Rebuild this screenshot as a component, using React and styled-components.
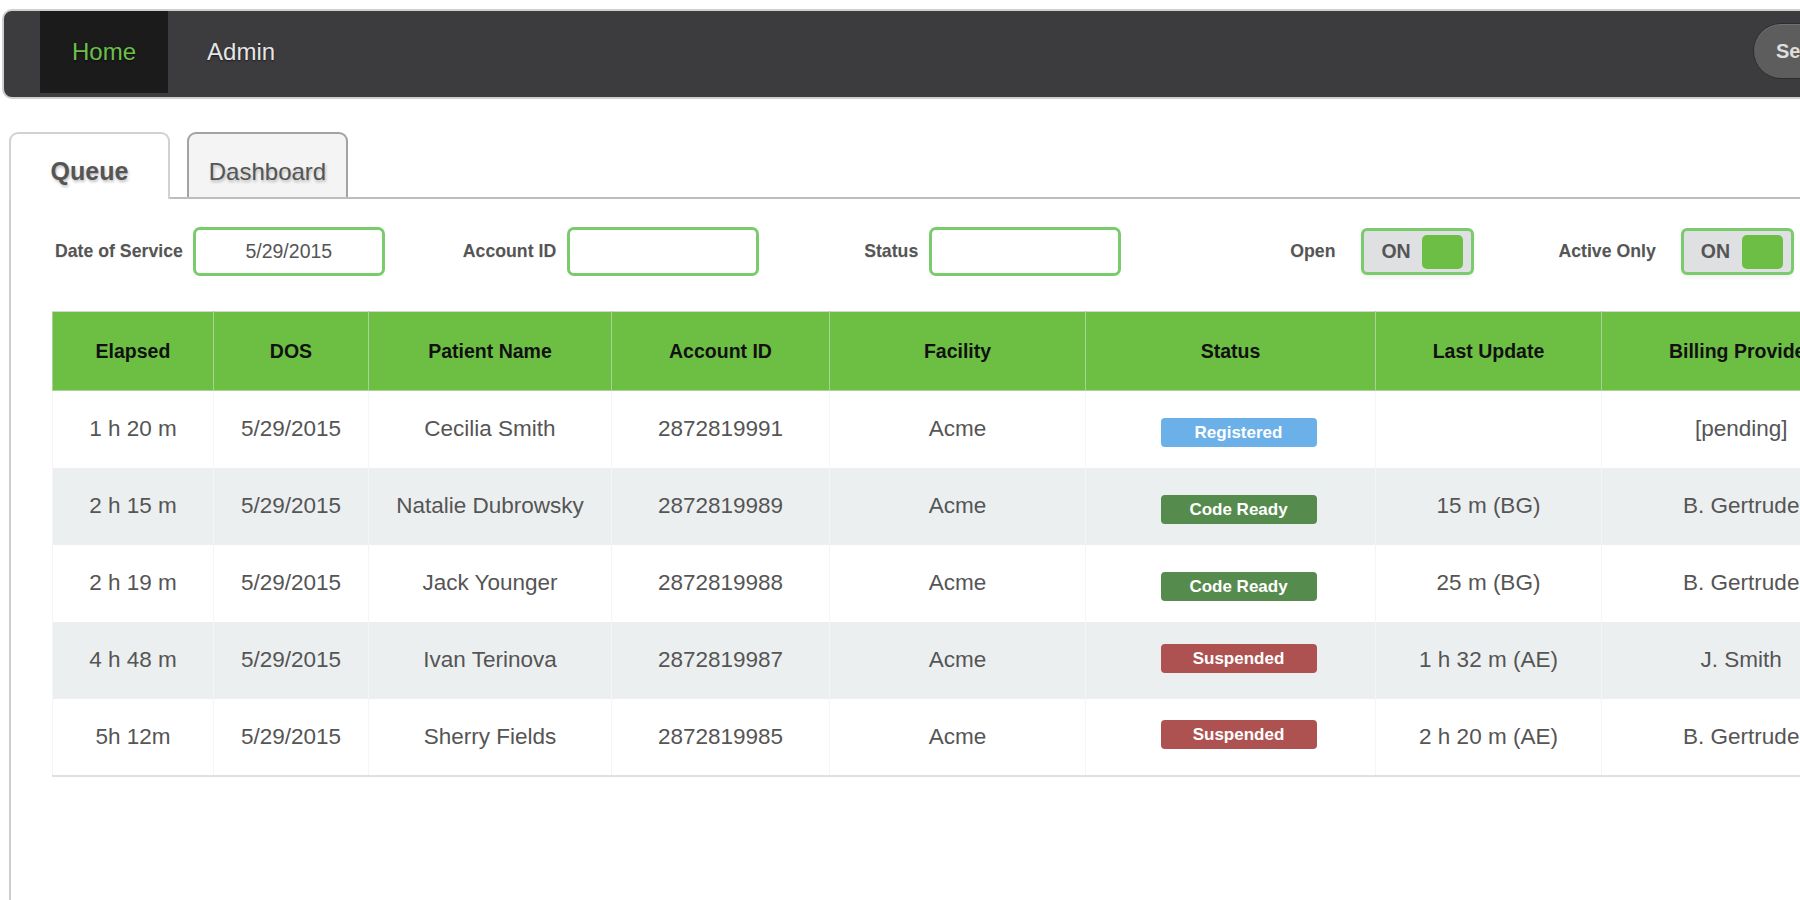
import React from 'react';
import styled, { createGlobalStyle } from 'styled-components';

const GlobalStyle = createGlobalStyle`
  html, body {
    margin: 0;
    padding: 0;
    background: #ffffff;
    overflow: hidden;
  }

  body {
    font-family: "Liberation Sans", Arial, sans-serif;
    color: #555;
  }
`;

const Page = styled.div`
  width: 1900px;
  padding: 9px 0 0 2px;
  box-sizing: border-box;
  min-height: 900px;
  display: flex;
  flex-direction: column;
`;

const NavBar = styled.nav`
  height: 90px;
  box-sizing: border-box;
  display: flex;
  align-items: stretch;
  gap: 7px;
  padding: 0 0 4px 36px;
  background: #3c3c3e;
  border: 2px solid #cfcfcf;
  border-radius: 10px;
`;

const NavItem = styled.a`
  display: flex;
  align-items: center;
  padding: 0 32px;
  font-size: 24px;
  color: ${p => (p.$active ? '#6cc04a' : '#e6e6e6')};
  background: ${p => (p.$active ? '#1b1b1b' : 'transparent')};
  text-shadow: 0 1px 2px rgba(0, 0, 0, 0.6);
  text-decoration: none;
  cursor: pointer;
`;

const NavButton = styled.button`
  margin: 12px 15px 0 auto;
  align-self: flex-start;
  width: 130px;
  height: 56px;
  padding: 0 0 0 22px;
  text-align: left;
  border-radius: 28px;
  border: 1px solid #2c2c2c;
  background: #5d5d5d;
  color: #dedede;
  font-family: "Liberation Sans", Arial, sans-serif;
  font-size: 20px;
  font-weight: bold;
  box-shadow: inset 0 1px 0 rgba(255, 255, 255, 0.12);
`;

const Section = styled.section`
  margin: 33px 0 0 7px;
  flex: 1;
  display: flex;
  flex-direction: column;
`;

const TabBar = styled.div`
  display: flex;
  align-items: flex-end;
  gap: 17px;
`;

const Tab = styled.div`
  position: relative;
  z-index: 1;
  width: 161px;
  height: ${p => (p.$active ? '67px' : '65px')};
  margin-bottom: ${p => (p.$active ? '-2px' : '0')};
  box-sizing: border-box;
  display: flex;
  align-items: flex-end;
  justify-content: center;
  padding-bottom: ${p => (p.$active ? '13px' : '11px')};
  border: 2px solid ${p => (p.$active ? '#d2d2d2' : '#a3a3a3')};
  border-bottom: none;
  border-radius: 9px 9px 0 0;
  background: ${p => (p.$active ? '#ffffff' : '#f4f4f4')};
  font-size: ${p => (p.$active ? '25px' : '24px')};
  font-weight: ${p => (p.$active ? 'bold' : 'normal')};
  color: #555;
  text-shadow: 1px 2px 3px rgba(0, 0, 0, 0.25);
  cursor: pointer;
`;

const Panel = styled.div`
  flex: 1;
  border-top: 2px solid #bdbdbd;
  border-left: 2px solid #cdcdcd;
  padding: 28px 0 0 0;
`;

const FilterRow = styled.div`
  display: flex;
  align-items: center;
  padding-left: 44px;
`;

const FilterGroup = styled.div`
  display: flex;
  align-items: center;
  gap: ${p => p.$gap}px;
  margin-left: ${p => p.$offset}px;
`;

const Label = styled.label`
  font-size: 17.7px;
  font-weight: bold;
  color: #555;
  text-shadow: 0 1px 1px rgba(0, 0, 0, 0.08);
`;

const Input = styled.input`
  width: 192px;
  height: 49px;
  box-sizing: border-box;
  border: 3px solid #7acb6b;
  border-radius: 7px;
  background: #fff;
  text-align: center;
  font-family: "Liberation Sans", Arial, sans-serif;
  font-size: 19.5px;
  color: #555;
  outline: none;
`;

const Toggle = styled.div`
  width: 113px;
  height: 47px;
  box-sizing: border-box;
  display: flex;
  align-items: center;
  justify-content: space-between;
  padding: 0 8px 0 17px;
  border: 3px solid #7acb6b;
  border-radius: 6px;
  background: #dfe0e1;
  box-shadow: 0 3px 4px rgba(0, 0, 0, 0.05);
  font-size: 19.5px;
  font-weight: bold;
  color: #555;
`;

const Knob = styled.span`
  width: 41px;
  height: 34px;
  border-radius: 5px;
  background: #6cbf44;
`;

const Table = styled.table`
  margin: 35px 0 0 41px;
  border-collapse: collapse;
  table-layout: fixed;
  width: 1820px;
  border-left: 1px solid #dcdcdc;
  border-bottom: 2px solid #e0e0e0;
`;

const Th = styled.th`
  width: ${p => p.$w}px;
  height: 78px;
  padding: 0;
  background: #6dbf43;
  border: 1px solid #a9d296;
  border-top-color: #cfd8cb;
  font-size: 19.5px;
  font-weight: bold;
  color: #111;
  text-align: center;
  white-space: nowrap;
  overflow: hidden;
`;

const Row = styled.tr`
  height: 77px;
  background: ${p => (p.$striped ? '#eceff0' : '#ffffff')};
`;

const Td = styled.td`
  padding: 0;
  border-left: 1px solid #f3f5f6;
  text-align: center;
  font-size: 22.5px;
  color: #555;
  white-space: nowrap;
`;

const badgeStyles = {
  Registered: { bg: '#6bb0e9', top: 6, bottom: 0 },
  'Code Ready': { bg: '#558b4c', top: 6, bottom: 0 },
  Suspended: { bg: '#ae5151', top: 0, bottom: 4 },
};

const Badge = styled.span`
  display: inline-block;
  width: 156px;
  height: 29px;
  line-height: 29px;
  margin: ${p => badgeStyles[p.$status].top}px 0 ${p => badgeStyles[p.$status].bottom}px 16px;
  border-radius: 4px;
  background: ${p => badgeStyles[p.$status].bg};
  color: #fff;
  font-size: 17px;
  font-weight: bold;
  vertical-align: middle;
`;

const columns = [
  { title: 'Elapsed', w: 160 },
  { title: 'DOS', w: 154 },
  { title: 'Patient Name', w: 242 },
  { title: 'Account ID', w: 217 },
  { title: 'Facility', w: 255 },
  { title: 'Status', w: 289 },
  { title: 'Last Update', w: 225 },
  { title: 'Billing Provider', w: 278 },
];

const rows = [
  { elapsed: '1 h 20 m', dos: '5/29/2015', name: 'Cecilia Smith', account: '2872819991', facility: 'Acme', status: 'Registered', update: '', provider: '[pending]' },
  { elapsed: '2 h 15 m', dos: '5/29/2015', name: 'Natalie Dubrowsky', account: '2872819989', facility: 'Acme', status: 'Code Ready', update: '15 m (BG)', provider: 'B. Gertrude' },
  { elapsed: '2 h 19 m', dos: '5/29/2015', name: 'Jack Younger', account: '2872819988', facility: 'Acme', status: 'Code Ready', update: '25 m (BG)', provider: 'B. Gertrude' },
  { elapsed: '4 h 48 m', dos: '5/29/2015', name: 'Ivan Terinova', account: '2872819987', facility: 'Acme', status: 'Suspended', update: '1 h 32 m (AE)', provider: 'J. Smith' },
  { elapsed: '5h 12m', dos: '5/29/2015', name: 'Sherry Fields', account: '2872819985', facility: 'Acme', status: 'Suspended', update: '2 h 20 m (AE)', provider: 'B. Gertrude' },
];

function App() {
  return (
    <Page>
      <GlobalStyle />
      <NavBar>
        <NavItem $active>Home</NavItem>
        <NavItem>Admin</NavItem>
        <NavButton>Search</NavButton>
      </NavBar>

      <Section>
        <TabBar>
          <Tab $active>Queue</Tab>
          <Tab>Dashboard</Tab>
        </TabBar>

        <Panel>
          <FilterRow>
            <FilterGroup $gap={10} $offset={0}>
              <Label>Date of Service</Label>
              <Input defaultValue="5/29/2015" />
            </FilterGroup>
            <FilterGroup $gap={11} $offset={78}>
              <Label>Account ID</Label>
              <Input />
            </FilterGroup>
            <FilterGroup $gap={11} $offset={105}>
              <Label>Status</Label>
              <Input />
            </FilterGroup>
            <FilterGroup $gap={26} $offset={169}>
              <Label>Open</Label>
              <Toggle>ON<Knob /></Toggle>
            </FilterGroup>
            <FilterGroup $gap={25} $offset={84}>
              <Label>Active Only</Label>
              <Toggle>ON<Knob /></Toggle>
            </FilterGroup>
          </FilterRow>

          <Table>
            <thead>
              <tr>
                {columns.map(col => (
                  <Th key={col.title} $w={col.w}>{col.title}</Th>
                ))}
              </tr>
            </thead>
            <tbody>
              {rows.map((row, i) => (
                <Row key={row.account} $striped={i % 2 === 1}>
                  <Td>{row.elapsed}</Td>
                  <Td>{row.dos}</Td>
                  <Td>{row.name}</Td>
                  <Td>{row.account}</Td>
                  <Td>{row.facility}</Td>
                  <Td><Badge $status={row.status}>{row.status}</Badge></Td>
                  <Td>{row.update}</Td>
                  <Td>{row.provider}</Td>
                </Row>
              ))}
            </tbody>
          </Table>
        </Panel>
      </Section>
    </Page>
  );
}

export default App;
